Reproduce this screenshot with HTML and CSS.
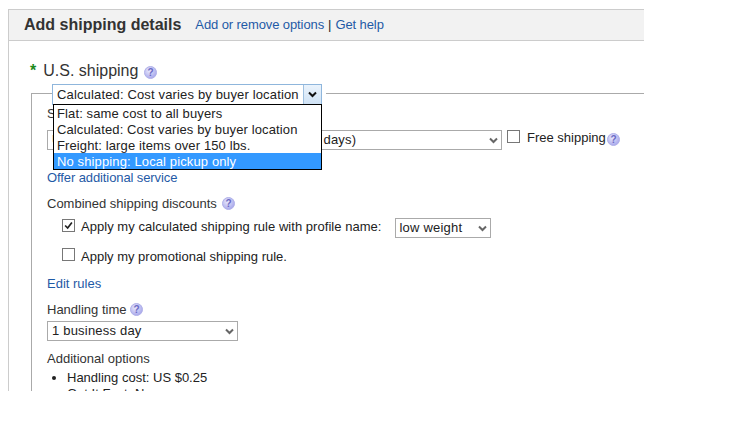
FILE: index.html
```
<!DOCTYPE html>
<html lang="en">
<head>
<meta charset="utf-8">
<title>Add shipping details</title>
<link rel="stylesheet" href="styles.css">
</head>
<body>
<svg class="defs" width="0" height="0" aria-hidden="true">
  <defs>
    <radialGradient id="hg" cx="40%" cy="35%" r="70%"><stop offset="0" stop-color="#e8e8fc"/><stop offset="1" stop-color="#a4a4ea"/></radialGradient>
    <symbol id="help" viewBox="0 0 13 13"><circle cx="6.5" cy="6.5" r="6" fill="url(#hg)" stroke="#b0b0e8"/><text x="6.5" y="10" text-anchor="middle" font-family="Liberation Sans" font-size="10" font-weight="700" fill="#6a6ac4">?</text></symbol>
    <symbol id="chev" viewBox="0 0 9 7"><path d="M1 1.5l3.5 3.5L8 1.5" fill="none" stroke="currentColor" stroke-width="2"/></symbol>
  </defs>
</svg>
<main class="panel">
  <header class="head">
    <h1 class="title">Add shipping details</h1>
    <a class="link tight" href="#">Add or remove options</a>
    <span class="sep">|</span>
    <a class="link tight" href="#">Get help</a>
  </header>
  <h2 class="section"><span class="star">*</span> U.S. shipping <svg class="help help-h"><use href="#help"/></svg></h2>
  <fieldset class="group">
    <legend class="legend">
      <div class="combo">
        <span class="combo-text">Calculated: Cost varies by buyer location</span>
        <span class="combo-btn"><svg class="chev"><use href="#chev"/></svg></span>
      </div>
      <ul class="menu">
        <li class="opt">Flat: same cost to all buyers</li>
        <li class="opt">Calculated: Cost varies by buyer location</li>
        <li class="opt">Freight: large items over 150 lbs.</li>
        <li class="opt opt-on">No shipping: Local pickup only</li>
      </ul>
    </legend>
    <div class="line services">Services</div>
    <div class="row-service">
      <div class="select select-service"><span>USPS Priority Mail Flat Rate (2 to 3 business days)</span><svg class="chev"><use href="#chev"/></svg></div>
      <span class="box box-free"></span>
      <span class="free">Free shipping</span>
      <svg class="help"><use href="#help"/></svg>
    </div>
    <a class="link tight line offer" href="#">Offer additional service</a>
    <div class="line combined">Combined shipping discounts <svg class="help help-c"><use href="#help"/></svg></div>
    <div class="check check-a">
      <span class="box"><svg class="tick" viewBox="0 0 13 13"><path d="M2.5 6.5l3 3 5-6.5" fill="none" stroke="#222" stroke-width="2"/></svg></span>
      <span class="check-label label-a">Apply my calculated shipping rule with profile name:</span>
      <div class="select select-profile"><span>low weight</span><svg class="chev"><use href="#chev"/></svg></div>
    </div>
    <div class="check check-b">
      <span class="box"></span>
      <span class="check-label label-b">Apply my promotional shipping rule.</span>
    </div>
    <a class="link line edit" href="#">Edit rules</a>
    <div class="line handling">Handling time <svg class="help"><use href="#help"/></svg></div>
    <div class="select select-time"><span>1 business day</span><svg class="chev"><use href="#chev"/></svg></div>
    <div class="line additional">Additional options</div>
    <ul class="bullets">
      <li>Handling cost: US $0.25</li>
      <li>Get It Fast: No</li>
    </ul>
  </fieldset>
</main>
</body>
</html>
```
FILE: styles.css
```
* { box-sizing: border-box; }
html, body { margin: 0; padding: 0; background: #fff; }
body { font: 13px/16px "Liberation Sans", Arial, sans-serif; color: #333; height: 427px; overflow: hidden; }
.defs { display: block; height: 0; }

.panel { margin: 9px 0 0 8px; width: 636px; height: 382px; overflow: hidden; border-left: 1px solid #ccc; }
.head { height: 32px; display: flex; align-items: center; gap: 4px; padding: 0 0 1px 15px; background: #f2f2f2; border-top: 1px solid #ccc; border-bottom: 1px solid #ccc; }
.title { margin: 0 10px 0 0; font-size: 16px; line-height: 20px; font-weight: 700; color: #333; }
.link { color: #1f5aa6; text-decoration: none; display: block; }
.tight { letter-spacing: -0.1px; }
.sep { color: #222; }

.section { margin: 20px 0 0 21px; height: 20px; font-size: 16px; line-height: 20px; font-weight: 400; color: #333; display: flex; align-items: center; gap: 7px; }
.star { color: #1d8a1d; font-weight: 700; }
.help { width: 13px; height: 13px; flex: none; display: inline-block; vertical-align: -2px; }
.help-h { margin: 3px 0 0 -1px; }
.help-c { margin-left: 2px; }

.group { margin: 3px 0 0 22px; padding: 0 0 0 15px; border: 0; border-top: 1px solid #aaa; border-left: 1px solid #aaa; min-width: 0; }
.legend { position: relative; margin-left: 5px; padding: 0 4px 0 0; height: 18px; float: none; }

.combo { width: 270px; height: 21px; display: flex; border: 1px solid #8fb6dc; background: #fff; color: #222; }
.combo-text { flex: 1; padding: 2px 0 0 4px; white-space: nowrap; letter-spacing: 0.15px; }
.combo-btn { width: 18px; border-left: 1px solid #9fc0e0; background: linear-gradient(#eaf3fc, #cfe2f5); display: flex; align-items: center; justify-content: center; color: #111; }
.chev { width: 9px; height: 7px; flex: none; }

.menu { position: absolute; left: 1px; top: 20px; width: 269px; margin: 0; padding: 0; list-style: none; background: #fff; border: 1px solid #000; color: #222; z-index: 2; letter-spacing: 0.12px; }
.opt { height: 16px; padding: 1px 0 0 3px; line-height: 15px; white-space: nowrap; }
.opt-on { background: #3399ff; color: #fff; }

.line { height: 16px; white-space: nowrap; }
.services { margin-top: 4px; }
.row-service { margin-top: 8px; height: 20px; display: flex; align-items: flex-start; }
.free { margin: 0 1px 0 7px; color: #222; }
.row-service .help { margin-top: 3px; }
.box { width: 13px; height: 13px; flex: none; border: 1px solid #777; background: #fff; display: block; }
.box-free { margin-left: 5px; }
.tick { display: block; width: 11px; height: 11px; }

.select { height: 20px; display: flex; align-items: center; justify-content: space-between; padding: 0 3px 0 4px; border: 1px solid #aaa; background: #fff; color: #222; white-space: nowrap; }
.select span { letter-spacing: 0.2px; }
.select .chev { color: #666; }
.select-service { width: 455px; }
.select-profile { width: 96px; margin: -1px 0 0 13px; }
.select-time { width: 191px; margin-top: 3px; }

.offer { margin-top: 20px; }
.combined { margin-top: 10px; }
.check { display: flex; align-items: flex-start; padding-left: 15px; color: #222; }
.check-a { margin-top: 7px; height: 20px; }
.check-b { margin-top: 9px; height: 16px; }
.check-label { margin-left: 6px; line-height: 16px; }
.label-a { letter-spacing: 0.04px; }
.label-b { margin-top: 1px; }
.edit { margin-top: 12px; }
.handling { margin-top: 10px; }
.additional { margin-top: 10px; }
.bullets { margin: 3px 0 0; padding: 0 0 0 20px; color: #222; }
.bullets li { height: 16px; }
```
